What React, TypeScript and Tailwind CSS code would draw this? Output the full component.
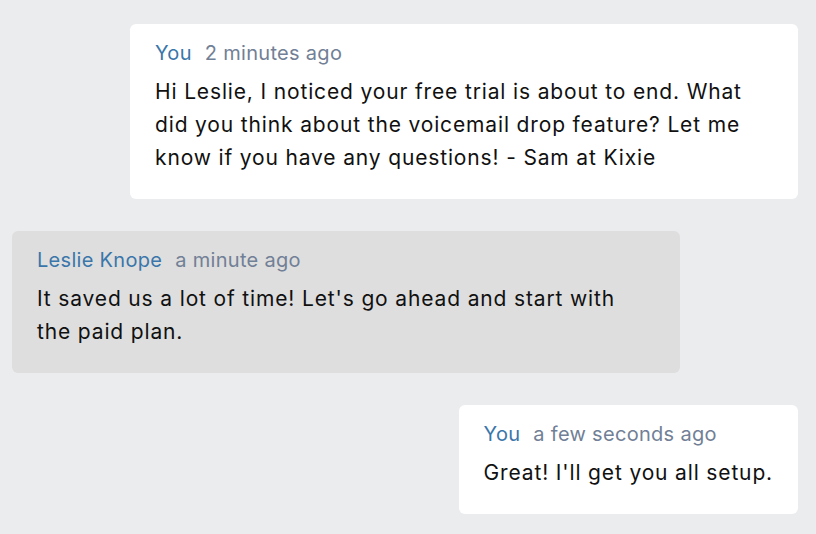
import React from 'react';

type Msg = { name: string; time: string; text: string; mine: boolean };

const messages: Msg[] = [
  {
    name: 'You',
    time: '2 minutes ago',
    text: 'Hi Leslie, I noticed your free trial is about to end. What did you think about the voicemail drop feature? Let me know if you have any questions! - Sam at Kixie',
    mine: true,
  },
  {
    name: 'Leslie Knope',
    time: 'a minute ago',
    text: "It saved us a lot of time! Let's go ahead and start with the paid plan.",
    mine: false,
  },
  {
    name: 'You',
    time: 'a few seconds ago',
    text: "Great! I'll get you all setup.",
    mine: true,
  },
];

const Bubble = ({ msg }: { msg: Msg }) => {
  return (
    <div className={msg.mine ? 'flex justify-end' : 'flex justify-start'}>
      <div
        className={
          msg.mine
            ? 'max-w-[668px] rounded-md bg-white px-[25px] pb-[25px] pt-[15px]'
            : 'max-w-[668px] rounded-md bg-[#dedede] px-[25px] pb-[25px] pt-[15px]'
        }
      >
        <div className="flex items-baseline text-[20px] leading-[28px] tracking-[0.3px]">
          <span className="text-[#3a76aa]">{msg.name}</span>
          <span className="ml-[13px] text-[#718096]">{msg.time}</span>
        </div>
        <p className="mt-2 text-[21px] leading-[33px] tracking-[0.85px] text-[#111111]">{msg.text}</p>
      </div>
    </div>
  );
};

const App = () => {
  return (
    <div className="min-h-screen bg-[#ebecee] pl-3 pr-[18px] pt-6 font-['Inter',sans-serif]">
      <div className="flex flex-col gap-8">
        {messages.map((m, i) => (
          <Bubble key={i} msg={m} />
        ))}
      </div>
    </div>
  );
};

export default App;
